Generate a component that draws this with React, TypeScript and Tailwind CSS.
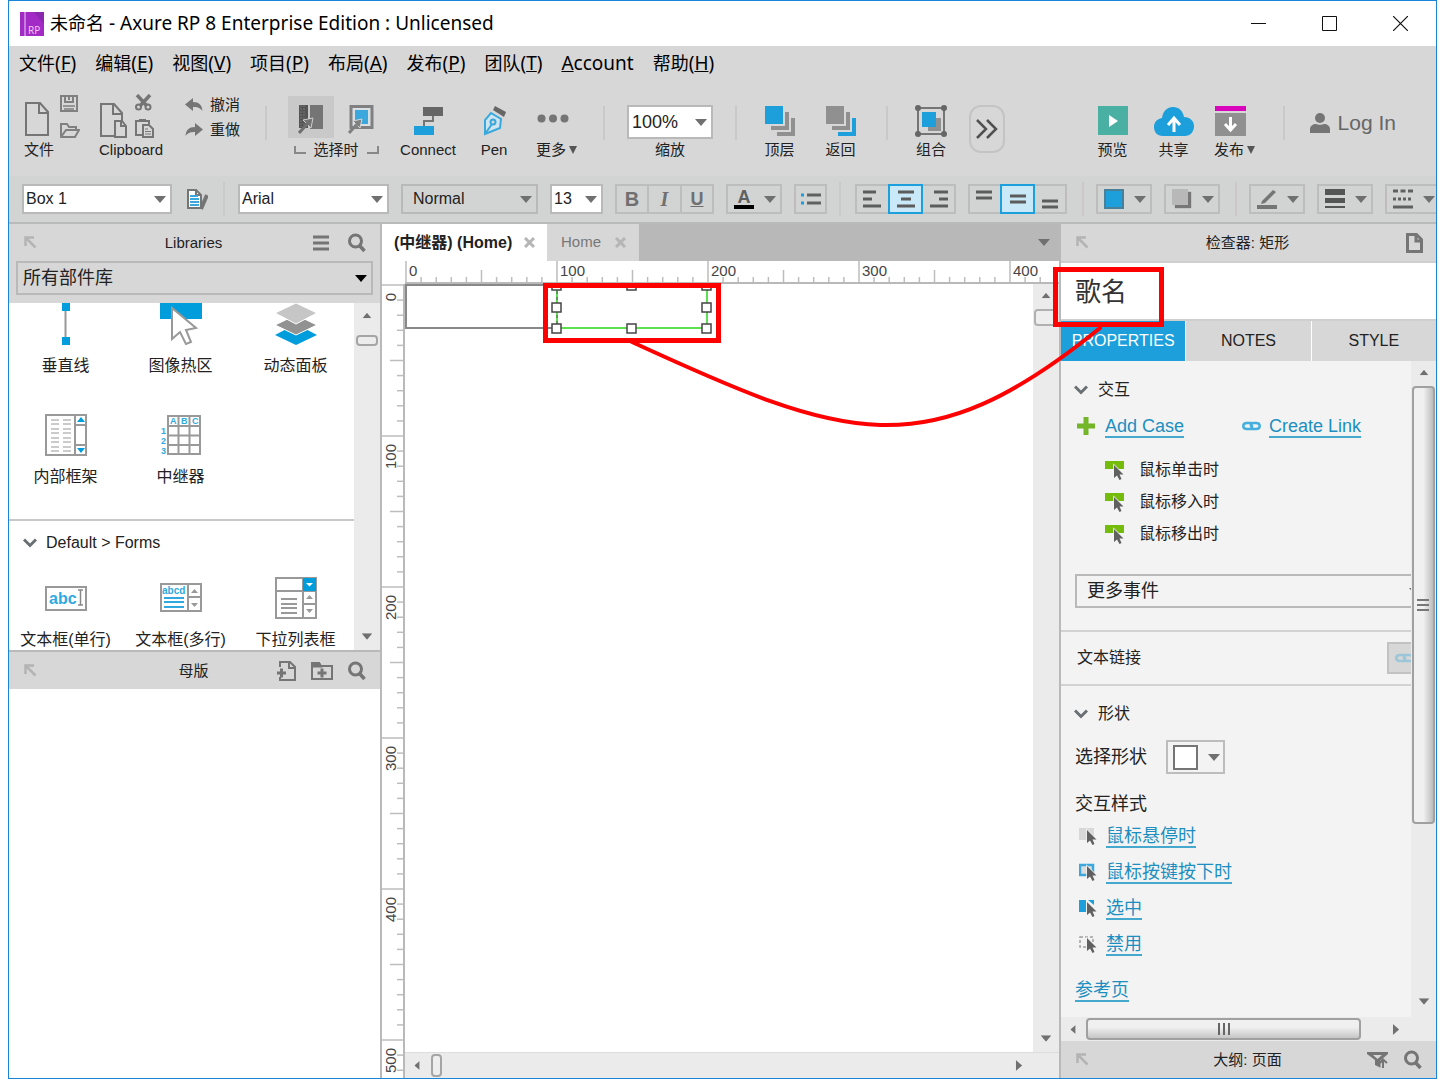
import React from 'react';

type IconProps = { className?: string };

const menus = [
  { text: '文件', key: 'F' },
  { text: '编辑', key: 'E' },
  { text: '视图', key: 'V' },
  { text: '项目', key: 'P' },
  { text: '布局', key: 'A' },
  { text: '发布', key: 'P' },
  { text: '团队', key: 'T' },
];

// one ruler unit of 100 is drawn 151px wide
const UNIT = 151;
const ticks = Array.from({ length: 60 }, (_, i) => i);

/* ---------- small shared pieces ---------- */

const Caret: React.FC<IconProps> = ({ className = 'text-[#707070]' }) => (
  <svg width="12" height="7" viewBox="0 0 12 7" className={className} fill="currentColor">
    <path d="M0 0h12L6 7z" />
  </svg>
);

const Select: React.FC<{ label: string; value: string; className: string; text?: string; caret?: string; pos?: string }> = ({
  label,
  value,
  className,
  text = 'text-base pl-0.5',
  caret = 'text-[#707070]',
  pos = 'right-1',
}) => (
  <div className={`relative shrink-0 border-2 border-[#b9b9b9] ${className}`}>
    <select aria-label={label} className={`block w-full h-full appearance-none bg-transparent outline-none ${text}`}>
      <option>{value}</option>
    </select>
    <span className={`absolute inset-y-0 flex items-center pointer-events-none ${pos}`}>
      <Caret className={caret} />
    </span>
  </div>
);

const Sep: React.FC<IconProps> = ({ className = '' }) => (
  <span className={`w-0.5 h-[34px] shrink-0 bg-[#c9c9c9] ${className}`} />
);

const Tool: React.FC<{ label: string; className: string; arrow?: boolean; children: React.ReactNode }> = ({
  label,
  className,
  arrow,
  children,
}) => (
  <button className={`flex flex-col items-center shrink-0 ${className}`}>
    <span className={arrow ? 'h-[39px] flex items-center pr-2' : 'h-[39px] flex items-center'}>{children}</span>
    <span className="flex items-center h-5 text-[15px] leading-5 whitespace-nowrap">
      {label}
      {arrow && (
        <svg width="8" height="8" viewBox="0 0 8 8" className="ml-[3px] text-[#555]" fill="currentColor">
          <path d="M0 0h8L4 8z" />
        </svg>
      )}
    </span>
  </button>
);

const CornerArrow = () => (
  <svg width="13" height="13" viewBox="0 0 13 13" fill="none" stroke="#b4b4b4" strokeWidth="2.5">
    <path d="M1.500 10V1.500H10M2 2l9.500 9.500" />
  </svg>
);

const SearchIcon = () => (
  <svg width="20" height="20" viewBox="0 0 20 20" fill="none" stroke="#757575" strokeWidth="3">
    <circle cx="8.500" cy="8" r="6" />
    <path d="M12.500 12.500l5 5.500" strokeWidth="3.500" />
  </svg>
);

const Chevron = () => (
  <svg width="14" height="10" viewBox="0 0 14 10" fill="none" stroke="#6a6f73" strokeWidth="3">
    <path d="M1 1.500l6 6 6-6" />
  </svg>
);

const PanelHeader: React.FC<{ title: string; children: React.ReactNode }> = ({ title, children }) => (
  <div className="grid grid-cols-[1fr_auto_1fr] items-center h-[37px] shrink-0 pl-[15px] pr-[13px] bg-[#d7d7d7]">
    <button aria-label="浮动" className="justify-self-start">
      <CornerArrow />
    </button>
    <h2 className="pr-1 text-[15px] leading-5">{title}</h2>
    <div className="flex items-center justify-end gap-3.5">{children}</div>
  </div>
);

/* ---------- toolbar icons ---------- */

const FileIcon = () => (
  <svg width="24" height="34" viewBox="0 0 24 34" fill="none" stroke="#757575" strokeWidth="2">
    <path d="M1 1h14l8 9v23H1zM14 1v10h9" />
  </svg>
);

const SaveIcon = () => (
  <svg width="18" height="17" viewBox="0 0 18 17" fill="none" stroke="#808080" strokeWidth="2">
    <path d="M1 1h16v15H1z" />
    <path d="M5 1v6h8V1M9 2v3" />
    <path d="M3 11h12M4 14h10" strokeWidth="1.500" />
  </svg>
);

const OpenIcon = () => (
  <svg width="20" height="16" viewBox="0 0 20 16" fill="none" stroke="#808080" strokeWidth="2">
    <path d="M1 14V2h6l2 3h7v3" />
    <path d="M1 15l5-7h13l-4 7z" />
  </svg>
);

const CopyIcon = () => (
  <svg width="27" height="35" viewBox="0 0 27 35" fill="none" stroke="#757575" strokeWidth="2">
    <path d="M15 33H1V1h13l8 9v8M13 1v10h9" />
    <path d="M15 18h7l4 5v11H15zM21 18v5h5" />
  </svg>
);

const CutIcon = () => (
  <svg width="17" height="17" viewBox="0 0 17 17" fill="none" stroke="#757575">
    <path d="M2 1l10 11M15 1L5 12" strokeWidth="3.500" />
    <circle cx="3.500" cy="13" r="2.500" strokeWidth="2" />
    <circle cx="13" cy="13" r="2.500" strokeWidth="2" />
  </svg>
);

const PasteIcon = () => (
  <svg width="19" height="19" viewBox="0 0 19 19" fill="none" stroke="#757575" strokeWidth="2">
    <path d="M8 16H1V2h13v3M5 2V0h5v2" />
    <path d="M8 6h6l4 4v8H8z" />
    <path d="M10 10h3M10 12.500h6M10 15h6" strokeWidth="1" />
  </svg>
);

const UndoIcon: React.FC<IconProps> = ({ className }) => (
  <svg width="18" height="14" viewBox="0 0 18 14" fill="#757575" className={className}>
    <path d="M8 0v4c6 0 9 3 9.500 9C15 9.500 12 9 8 9v4L0 6.500z" />
  </svg>
);

const IntersectIcon = () => (
  <svg width="26" height="30" viewBox="0 0 26 30">
    <path d="M1 1h9v23H1z" fill="#555" />
    <path d="M3 1v22M6 1v22" stroke="#777" strokeWidth="1" strokeDasharray="2 1" />
    <path d="M12 1h13v24H12z" fill="#757575" />
    <path d="M5 16l10-2-2 10z" fill="#757575" stroke="#ccc" strokeWidth="1" />
    <path d="M1 29L12 17" stroke="#707070" strokeWidth="3" />
  </svg>
);

const ContainIcon = () => (
  <svg width="27" height="30" viewBox="0 0 27 30">
    <path d="M3 2.500h21v21H3z" fill="#d9dfe2" stroke="#808080" strokeWidth="3" />
    <path d="M7 6h13v14H7z" fill="#3aa8dc" />
    <path d="M5 17l9-2-2 9z" fill="#808080" stroke="#d7d7d7" strokeWidth="1" />
    <path d="M1 29L11 18" stroke="#808080" strokeWidth="3" />
  </svg>
);

const ConnectIcon = () => (
  <svg width="30" height="30" viewBox="0 0 30 30">
    <path d="M10 1h20v9H10z" fill="#666" />
    <path d="M20 10v5h-9v6" fill="none" stroke="#757575" strokeWidth="2" />
    <path d="M1 20h20v9H1z" fill="#1c9fdb" />
  </svg>
);

const PenIcon = () => (
  <svg width="23" height="30" viewBox="0 0 23 30">
    <path d="M12 0l11 6-2 5-11-7z" fill="#666" />
    <path d="M8 7l10 6-1 9L2 28 2 14z" fill="#cfe6f1" stroke="#3aa8dc" strokeWidth="2" />
    <path d="M2 28l7-10" stroke="#3aa8dc" strokeWidth="2" />
    <circle cx="10" cy="16" r="2.500" fill="#d7d7d7" stroke="#3aa8dc" strokeWidth="2" />
  </svg>
);

const FrontIcon = () => (
  <svg width="32" height="32" viewBox="0 0 32 32" fill="#909090">
    <path d="M1 1h18v18H1z" fill="#1c9fdb" />
    <path d="M21 7h4v18H7v-4h14z" />
    <path d="M27 13h4v18H13v-4h14z" />
  </svg>
);

const BackIcon = () => (
  <svg width="32" height="32" viewBox="0 0 32 32" fill="#909090">
    <path d="M1 1h18v18H1z" />
    <path d="M21 7h4v18H7v-4h14z" />
    <path d="M27 13h4v18H13v-4h14z" fill="#1c9fdb" />
  </svg>
);

const GroupIcon = () => (
  <svg width="34" height="34" viewBox="0 0 34 34">
    <path d="M4 4h26v26H4z" fill="none" stroke="#757575" strokeWidth="2" />
    <path d="M14 14h13v13H14z" fill="#909090" />
    <path d="M8 8h14v15H8z" fill="#1c9fdb" />
    <g fill="#666">
      <circle cx="4" cy="4" r="3" />
      <circle cx="30" cy="4" r="3" />
      <circle cx="4" cy="30" r="3" />
      <circle cx="30" cy="30" r="3" />
    </g>
  </svg>
);

const PreviewIcon = () => (
  <svg width="30" height="29" viewBox="0 0 30 29">
    <path d="M0 0h30v29H0z" fill="#4bb0a4" />
    <path d="M11 9l9 6-9 6z" fill="#fff" />
  </svg>
);

const CloudIcon = () => (
  <svg width="40" height="30" viewBox="0 0 40 30">
    <path d="M9 30C3 30 0 26 0 21c0-5 3-8 8-9C9 5 13 1 19 1c6 0 10 4 11 10 6 0 10 4 10 9 0 6-4 10-9 10z" fill="#1c9fdb" />
    <path d="M20 26V14M14 19l6-7 6 7" fill="none" stroke="#fff" strokeWidth="3" />
  </svg>
);

const PublishIcon = () => (
  <svg width="31" height="30" viewBox="0 0 31 30">
    <path d="M0 0h31v5H0z" fill="#d905bd" />
    <path d="M0 7h31v23H0z" fill="#909090" />
    <path d="M15.500 11v12M10 18l5.500 6 5.500-6" fill="none" stroke="#fff" strokeWidth="3" />
  </svg>
);

/* ---------- format bar ---------- */

const btn = 'flex items-center justify-center h-[30px] border-2 border-[#bdbdbd] shrink-0';
const btnOn = 'flex items-center justify-center h-[30px] border-2 border-[#1c9fdb] bg-[#c9e9f8] shrink-0';

const Lines: React.FC<{ d: string }> = ({ d }) => (
  <svg width="20" height="20" viewBox="0 0 20 20" fill="none" stroke="#5c5c5c" strokeWidth="3">
    <path d={d} />
  </svg>
);

const DropButton: React.FC<{ label: string; children: React.ReactNode }> = ({ label, children }) => (
  <button aria-label={label} className="flex items-center justify-between w-14 h-[30px] pl-1.5 pr-1 border-2 border-[#bdbdbd] shrink-0">
    {children}
    <Caret />
  </button>
);

const FormatBar = () => (
  <div className="flex items-center h-12 shrink-0 pl-[13px] gap-3 bg-[#d2d4d4] border-b-2 border-[#bababa] overflow-hidden">
    <Select label="样式" value="Box 1" className="w-[150px] h-[30px] bg-white" />
    <button aria-label="管理样式" className="ml-[3px] mr-[3px] shrink-0">
      <svg width="21" height="21" viewBox="0 0 21 21">
        <path d="M1 1h8l5 5v13H1z" fill="#fff" stroke="#757575" strokeWidth="2" />
        <path d="M9 1v5h5" fill="none" stroke="#757575" strokeWidth="2" />
        <path d="M3 7h8M3 10h9M3 13h9M3 16h9" stroke="#3aa8dc" strokeWidth="2" />
        <path d="M20 6l-6 14" stroke="#757575" strokeWidth="4" />
      </svg>
    </button>
    <Sep className="mr-px" />
    <Select label="字体" value="Arial" className="w-[151px] h-[30px] bg-white" />
    <Select label="字形" value="Normal" className="w-[137px] h-[30px]" text="text-base pl-2.5" />
    <Select label="字号" value="13" className="w-[53px] h-[30px] bg-white" />
    <div className="flex -space-x-0.5 text-[#707070] text-xl leading-5">
      <button className={`${btn} w-[34px] font-bold`}>B</button>
      <button className={`${btn} w-[35px] font-bold italic font-['Liberation_Serif',serif]`}>I</button>
      <button className={`${btn} w-[34px] font-bold underline text-lg`}>U</button>
    </div>
    <DropButton label="文字颜色">
      <span className="flex flex-col items-center w-5 text-[#606060] text-lg font-bold leading-4">
        A
        <span className="w-5 h-1 bg-black" />
      </span>
    </DropButton>
    <button aria-label="项目符号" className={`${btn} w-[33px]`}>
      <svg width="20" height="14" viewBox="0 0 20 14">
        <path d="M6 3h14M6 11h14" stroke="#606060" strokeWidth="3" />
        <path d="M0 3h3M0 11h3" stroke="#1c9fdb" strokeWidth="3" />
      </svg>
    </button>
    <Sep className="mr-[2px]" />
    <div className="flex">
      <button aria-label="左对齐" className={`${btn} w-[33px] border-r-0`}><Lines d="M0 3h13M0 10h9M0 17h18" /></button>
      <button aria-label="居中" className={`${btnOn} w-[35px]`}><Lines d="M2 3h16M5 10h10M1 17h18" /></button>
      <button aria-label="右对齐" className={`${btn} w-[33px] border-l-0`}><Lines d="M5 3h14M10 10h9M1 17h18" /></button>
    </div>
    <div className="flex">
      <button aria-label="顶部对齐" className={`${btn} w-[32px] border-r-0`}><Lines d="M1 3h16M1 9h16" /></button>
      <button aria-label="垂直居中" className={`${btnOn} w-[35px]`}><Lines d="M2 7h16M2 13h16" /></button>
      <button aria-label="底部对齐" className={`${btn} w-[32px] border-l-0`}><Lines d="M2 12h16M2 18h16" /></button>
    </div>
    <Sep className="ml-[3px]" />
    <DropButton label="填充颜色">
      <span className="w-5 h-5 bg-[#1c9fdb] border-2 border-[#4a7f9a]" />
    </DropButton>
    <DropButton label="外部阴影">
      <span className="w-4 h-4 mb-1 bg-[#b8b8b8] shadow-[3px_3px_1px_#777]" />
    </DropButton>
    <Sep className="ml-[3px]" />
    <DropButton label="线段颜色">
      <svg width="20" height="20" viewBox="0 0 20 20">
        <path d="M0 16h20v4H0z" fill="#757575" />
        <path d="M5 12L16 1l3 2L8 14l-4 1z" fill="#757575" />
      </svg>
    </DropButton>
    <DropButton label="线宽">
      <svg width="20" height="20" viewBox="0 0 20 20" fill="#555">
        <path d="M0 0h20v6H0zM0 9h20v5H0zM0 17h20v2H0z" />
      </svg>
    </DropButton>
    <DropButton label="线段类型">
      <svg width="20" height="20" viewBox="0 0 20 20" stroke="#606060" strokeWidth="3">
        <path d="M0 2h20" strokeDasharray="5 2.500" />
        <path d="M0 10h20" strokeDasharray="3 2" />
        <path d="M0 18h20" />
      </svg>
    </DropButton>
  </div>
);

const Toolbar = () => (
  <div className="flex items-end h-[94px] shrink-0 pl-[15px] pr-10 pb-4 overflow-hidden">
    <div className="flex flex-col w-[75px] shrink-0">
      <div className="flex items-end h-[46px] pl-px pb-0.5 gap-[11px]">
        <button aria-label="新建" className="pb-0.5"><FileIcon /></button>
        <div className="flex flex-col gap-2.5">
          <button aria-label="保存"><SaveIcon /></button>
          <button aria-label="打开"><OpenIcon /></button>
        </div>
      </div>
      <span className="text-[15px] leading-5">文件</span>
    </div>
    <div className="flex flex-col w-[86px] shrink-0">
      <div className="flex items-end h-[46px] pl-px pb-0.5 gap-2">
        <button aria-label="复制"><CopyIcon /></button>
        <div className="flex flex-col gap-2">
          <button aria-label="剪切"><CutIcon /></button>
          <button aria-label="粘贴"><PasteIcon /></button>
        </div>
      </div>
      <span className="text-[15px] leading-5">Clipboard</span>
    </div>
    <div className="flex flex-col self-start shrink-0 pt-[13px] gap-[5px] text-[15px] leading-5">
      <button className="flex items-center gap-[7px]"><UndoIcon />撤消</button>
      <button className="flex items-center gap-[7px]"><UndoIcon className="-scale-x-100" />重做</button>
    </div>
    <Sep className="ml-[25px] mr-[21px] mb-5" />
    <div className="flex flex-col items-center shrink-0">
      <div className="flex pb-0.5 gap-1">
        <button aria-label="相交选中" className="flex items-center justify-center w-[46px] h-[42px] pt-1 bg-[#c9c9c9]"><IntersectIcon /></button>
        <button aria-label="包含选中" className="flex items-center justify-center w-[46px] h-[42px] pt-1"><ContainIcon /></button>
      </div>
      <span className="flex items-center gap-2 text-[15px] leading-5">
        <span className="w-3 h-2 border-l-2 border-b-2 border-[#888]" />
        选择时
        <span className="w-3 h-2 border-r-2 border-b-2 border-[#888]" />
      </span>
    </div>
    <Tool label="Connect" className="w-14 ml-4"><ConnectIcon /></Tool>
    <Tool label="Pen" className="w-7 ml-6"><PenIcon /></Tool>
    <Tool label="更多" className="w-[41px] ml-7" arrow>
      <svg width="32" height="9" viewBox="0 0 32 9" fill="#757575" className="mb-1">
        <circle cx="4.500" cy="4.500" r="4" />
        <circle cx="16" cy="4.500" r="4" />
        <circle cx="27.500" cy="4.500" r="4" />
      </svg>
    </Tool>
    <Sep className="mx-[26px] mb-5" />
    <div className="flex flex-col items-center shrink-0 -ml-1">
      <Select label="缩放" value="100%" className="w-[86px] h-[34px] mb-px bg-white" text="text-lg pl-[3px]" />
      <span className="text-[15px] leading-5">缩放</span>
    </div>
    <Sep className="ml-[22px] mr-[26px] mb-5" />
    <Tool label="顶层" className="w-[33px]"><FrontIcon /></Tool>
    <Tool label="返回" className="w-[33px] ml-7"><BackIcon /></Tool>
    <Sep className="ml-[29px] mr-[26px] mb-5" />
    <Tool label="组合" className="w-[34px]"><GroupIcon /></Tool>
    <button aria-label="更多工具" className="flex items-center justify-center w-9 h-12 ml-[21px] mb-[7px] shrink-0 border-2 border-[#c4c4c4] rounded-xl">
      <svg width="22" height="20" viewBox="0 0 22 20" fill="none" stroke="#505050" strokeWidth="2.500">
        <path d="M1 1l9 9-9 9M11 1l9 9-9 9" />
      </svg>
    </button>
    <div className="flex items-end ml-auto">
      <Tool label="预览" className="w-[30px]"><PreviewIcon /></Tool>
      <Tool label="共享" className="w-10 ml-[26px]"><CloudIcon /></Tool>
      <Tool label="发布" className="w-[42px] ml-5" arrow><PublishIcon /></Tool>
      <Sep className="ml-[27px] mr-[25px] mb-5" />
      <button className="flex items-center gap-2 h-7 mb-[23px] whitespace-nowrap text-[21px] leading-7 text-[#666]">
        <svg width="20" height="20" viewBox="0 0 20 20" fill="#757575">
          <circle cx="10" cy="5" r="5" />
          <path d="M0 20v-4c0-3 3-5 6-5 2 1 6 1 8 0 3 0 6 2 6 5v4z" />
        </svg>
        Log In
      </button>
    </div>
  </div>
);

/* ---------- left: libraries and masters ---------- */

const Widget: React.FC<{ label: string; children: React.ReactNode }> = ({ label, children }) => (
  <div className="flex flex-col items-center w-[115px] shrink-0 pr-0.5">
    <svg width="42" height="42" viewBox="0 0 42 42">{children}</svg>
    <span className="mt-[9px] text-base leading-6 whitespace-nowrap">{label}</span>
  </div>
);

const Libraries = () => (
  <section className="flex flex-col h-[428px] shrink-0 bg-white border-b-2 border-[#b9b9b9]">
    <PanelHeader title="Libraries">
      <button aria-label="选项" className="mr-1">
        <svg width="16" height="16" viewBox="0 0 16 16" stroke="#757575" strokeWidth="3">
          <path d="M0 2h16M0 8h16M0 14h16" />
        </svg>
      </button>
      <button aria-label="搜索"><SearchIcon /></button>
    </PanelHeader>
    <div className="px-[7px] pb-2 bg-[#d7d7d7]">
      <Select label="部件库" value="所有部件库" className="h-[34px]" text="text-lg pl-[5px]" caret="text-black" />
    </div>
    <div className="flex flex-1 min-h-0">
      <div className="flex-1 overflow-hidden">
        <div className="flex">
          <Widget label="垂直线">
            <path d="M20.500 4v30" stroke="#999" strokeWidth="2" />
            <path d="M17 0h8v8h-8zM17 34h8v8h-8z" fill="#009ddc" />
          </Widget>
          <Widget label="图像热区">
            <path d="M0 0h42v16H0z" fill="#009ddc" />
            <path d="M12 5v31l8-7 6 12 5-2-5-12 10-2z" fill="#fff" stroke="#999" strokeWidth="2" />
          </Widget>
          <Widget label="动态面板">
            <path d="M0 32l21-11 21 11-21 10z" fill="#009ddc" />
            <path d="M0 22l21-10 21 10-21 10z" fill="#929292" stroke="#fff" strokeWidth="1" />
            <path d="M0 10L21 0l21 10-21 11z" fill="#c6c6c6" stroke="#fff" strokeWidth="1" />
          </Widget>
        </div>
        <div className="flex mt-9 pb-[30px] border-b-2 border-[#c8c8c8]">
          <Widget label="内部框架">
            <path d="M1 1h40v40H1zM30 1v40M30 11h11M30 31h11" fill="none" stroke="#999" strokeWidth="2" />
            <path d="M6 6h8M18 6h8M6 10h8M18 10h8M6 15h8M18 15h8M6 19h8M18 19h8M6 24h8M18 24h8M6 28h8M18 28h8M6 33h8M18 33h8M6 37h8M18 37h8" stroke="#bbb" strokeWidth="1.500" />
            <path d="M32 8l4-5 4 5zM32 34h8l-4 5z" fill="#009ddc" />
          </Widget>
          <Widget label="中继器">
            <path d="M8 2h32v38H8zM18.500 2v38M29.500 2v38M8 12h32M8 21.500h32M8 31h32" fill="none" stroke="#999" strokeWidth="2" />
            <g fill="#2fa9e0" fontSize="9" fontWeight="bold">
              <text x="10" y="10">A</text>
              <text x="21" y="10">B</text>
              <text x="32" y="10">C</text>
              <text x="1" y="20">1</text>
              <text x="1" y="30">2</text>
              <text x="1" y="40">3</text>
            </g>
          </Widget>
        </div>
        <h3 className="flex items-center h-11 pl-[14px] mb-3 gap-[9px] text-base"><Chevron />Default &gt; Forms</h3>
        <div className="flex">
          <Widget label="文本框(单行)">
            <path d="M1 10h40v23H1z" fill="none" stroke="#999" strokeWidth="2" />
            <text x="4" y="27" fill="#2fa9e0" fontSize="16" fontWeight="bold">abc</text>
            <path d="M33 13h5M33 28h5M35.500 13v15" stroke="#888" strokeWidth="1.500" />
          </Widget>
          <Widget label="文本框(多行)">
            <path d="M1 7h40v27H1zM28 7v27M28 20h13" fill="none" stroke="#999" strokeWidth="2" />
            <text x="2" y="17" fill="#2fa9e0" fontSize="10" fontWeight="bold">abcd</text>
            <path d="M4 21h20M4 25h20M4 30h20" stroke="#2fa9e0" strokeWidth="2" />
            <path d="M31 16l3.500-4 3.500 4zM31 26h7l-3.500 4z" fill="#999" />
          </Widget>
          <Widget label="下拉列表框">
            <path d="M1 1h40v40H1zM28 1v40M1 14h40M28 27h13" fill="none" stroke="#999" strokeWidth="2" />
            <path d="M28 1h13v13H28z" fill="#009ddc" />
            <path d="M31 6h7l-3.500 3.500z" fill="#fff" />
            <path d="M6 22h16M6 27h16M6 31h16M6 36h16" stroke="#999" strokeWidth="2" />
            <path d="M31 22l3.500-4 3.500 4zM31 32h7l-3.500 4z" fill="#999" />
          </Widget>
        </div>
      </div>
      <div className="flex flex-col items-center w-[26px] shrink-0 pt-[9px] pb-2.5 bg-[#ebebeb]">
        <Caret className="rotate-180 scale-75 text-[#707070]" />
        <span className="w-[22px] h-[11px] mt-4 bg-[#ececec] border-2 border-[#a5a5a5] rounded" />
        <Caret className="mt-auto scale-90 text-[#707070]" />
      </div>
    </div>
  </section>
);

const Masters = () => (
  <section className="flex-1 bg-white">
    <PanelHeader title="母版">
      <button aria-label="添加母版">
        <svg width="20" height="20" viewBox="0 0 20 20" fill="none" stroke="#757575" strokeWidth="2">
          <path d="M3 6V1h10l5 5v13H3v-3M12 1v6h6" />
          <path d="M0 12h9M4.500 7.500v9" strokeWidth="3" />
        </svg>
      </button>
      <button aria-label="添加文件夹">
        <svg width="22" height="20" viewBox="0 0 22 20" fill="none" stroke="#757575" strokeWidth="2">
          <path d="M1 18V2h7l2 3h11v13z" />
          <path d="M1 3h7l1 2H1zM6.500 12h9M11 7.500v9" strokeWidth="3" />
        </svg>
      </button>
      <button aria-label="搜索"><SearchIcon /></button>
    </PanelHeader>
  </section>
);

/* ---------- centre: tabs, rulers and canvas ---------- */

const CloseX = () => (
  <svg width="11" height="11" viewBox="0 0 11 11" stroke="#b5b5b5" strokeWidth="3">
    <path d="M1 1l9 9M10 1l-9 9" />
  </svg>
);

const tickLength = (i: number) => (i % 10 === 0 ? 23 : i % 5 === 0 ? 13 : 6);

const HRuler = () => (
  <div className="h-[23px] shrink-0 ml-[23px] overflow-hidden border-b-2 border-[#b9b9b9]">
    <svg width="900" height="23">
      {ticks.map((i) => (
        <path key={i} d={`M${1 + (i * UNIT) / 10} 22v-${tickLength(i)}`} stroke="#bdbdbd" strokeWidth="1.500" />
      ))}
      {[0, 1, 2, 3, 4].map((n) => (
        <text key={n} x={n * UNIT + 4} y="15" fontSize="15" fill="#444">{n * 100}</text>
      ))}
    </svg>
  </div>
);

const VRuler = () => (
  <div className="w-[23px] shrink-0 overflow-hidden border-r-2 border-[#b9b9b9]">
    <svg width="21" height="900">
      {ticks.map((i) => (
        <path key={i} d={`M21 ${1 + (i * UNIT) / 10}h-${tickLength(i)}`} stroke="#bdbdbd" strokeWidth="1.500" />
      ))}
      {[0, 1, 2, 3, 4, 5].map((n) => (
        <text key={n} transform={`translate(14 ${n * UNIT + 9}) rotate(-90)`} textAnchor="end" fontSize="15" fill="#444">
          {n * 100}
        </text>
      ))}
    </svg>
  </div>
);

const handles = [
  [152, 2], [227, 2], [302, 2],
  [152, 24], [302, 24],
  [152, 45], [227, 45], [302, 45],
];

const Workspace = () => (
  <main className="flex flex-col flex-1 min-w-0 bg-white">
    <div className="flex items-center h-[37px] shrink-0 pr-[9px] bg-[#b8b8b8]">
      <button className="flex items-center h-full w-[165px] pl-3 gap-3 bg-white font-bold text-base whitespace-nowrap">
        (中继器) (Home)
        <CloseX />
      </button>
      <button className="flex items-center h-full w-[92px] pl-3.5 gap-3.5 bg-[#d7d7d7] text-[15px] text-[#777]">
        Home
        <CloseX />
      </button>
      <button aria-label="标签列表" className="ml-auto"><Caret /></button>
    </div>
    <HRuler />
    <div className="flex flex-1 min-h-0">
      <VRuler />
      <div className="flex flex-col flex-1 min-w-0">
        <div className="flex flex-1 min-h-0">
          <div className="flex-1 overflow-hidden">
            <svg width="400" height="70" fill="none">
              <path d="M1 1h151v43H1z" stroke="#888" strokeWidth="2" />
              <path d="M152 1h150v43H152z" stroke="#5be04f" strokeWidth="2" />
              <path d="M152 1v43" stroke="#555" strokeDasharray="3 3" />
              {handles.map(([x, y]) => (
                <rect key={`${x}-${y}`} x={x - 5} y={y - 5} width="9" height="9" fill="#fff" stroke="#444" strokeWidth="1.500" />
              ))}
            </svg>
          </div>
          <div className="flex flex-col items-center w-[26px] shrink-0 pt-2 pb-2.5 bg-[#ebebeb]">
            <Caret className="rotate-180 scale-75 text-[#707070]" />
            <span className="w-6 h-[17px] mt-2.5 bg-[#eee] border-2 border-[#b0b0b0] rounded" />
            <Caret className="mt-auto scale-90 text-[#707070]" />
          </div>
        </div>
        <div className="flex items-center h-[26px] shrink-0 pl-1.5 pr-[34px] bg-[#ebebeb] border-t border-[#ddd]">
          <Caret className="rotate-90 scale-75 text-[#707070]" />
          <span className="w-[11px] h-[23px] ml-2 bg-[#eee] border-2 border-[#a5a5a5] rounded" />
          <Caret className="ml-auto -rotate-90 scale-90 text-[#707070]" />
        </div>
      </div>
    </div>
  </main>
);

/* ---------- right: inspector ---------- */

const LinkIcon = () => (
  <svg width="19" height="10" viewBox="0 0 19 10" fill="none" stroke="#45b0de" strokeWidth="2.500">
    <path d="M10 2H5C0 2 0 8 5 8h2c4 0 4-4 1-4M9 8h5c5 0 5-6 0-6h-2C8 2 8 6 11 6" />
  </svg>
);

const Pointer = () => (
  <path d="M8 3v13l3-2.500 2.500 4.500 2-1-2-4.500h4z" fill="#606060" stroke="#f3f3f3" strokeWidth="1.500" paintOrder="stroke" />
);

const EventIcon = () => (
  <svg width="20" height="19" viewBox="0 0 20 19">
    <path d="M0 0h19v8H0z" fill="#74bb0c" />
    <g transform="translate(1 1)"><Pointer /></g>
  </svg>
);

const events = ['鼠标单击时', '鼠标移入时', '鼠标移出时'];

const states = [
  { label: '鼠标悬停时', shape: <path d="M0 1h15v12H0z" fill="#d8d8d8" /> },
  { label: '鼠标按键按下时', shape: <path d="M1 2h13v10H1z" fill="#dcdcdc" stroke="#3aa8dc" strokeWidth="2.500" /> },
  { label: '选中', shape: <path d="M0 1h7v12H0zM9 1h6v5z" fill="#1c9fdb" /> },
  { label: '禁用', shape: <path d="M1 2h13v10H1z" fill="none" stroke="#a0a0a0" strokeWidth="1.500" strokeDasharray="3 2" /> },
];

const link = 'text-lg leading-6 text-[#1c8fc0] underline underline-offset-4 decoration-2 decoration-[#45a8cf]';

const Inspector = () => (
  <aside className="flex flex-col w-[377px] shrink-0 border-l-2 border-[#b9b9b9] bg-[#f3f3f3]">
    <PanelHeader title="检查器: 矩形">
      <button aria-label="页面">
        <svg width="17" height="20" viewBox="0 0 17 20" fill="none" stroke="#757575" strokeWidth="3">
          <path d="M1.500 1.500h9l5 5v12h-14zM10 2v6h5" />
        </svg>
      </button>
    </PanelHeader>
    <input
      aria-label="名称"
      defaultValue="歌名"
      className="h-[60px] shrink-0 px-3.5 pb-1 bg-white border-y-2 border-[#cfcfcf] text-[26px] text-[#333] outline-none"
    />
    <div className="grid grid-cols-3 h-10 shrink-0 gap-px bg-white text-base">
      <button className="bg-[#1c9fdb] text-white">PROPERTIES</button>
      <button className="bg-[#d7d7d7]">NOTES</button>
      <button className="bg-[#d7d7d7]">STYLE</button>
    </div>
    <div className="flex flex-1 min-h-0">
      <div className="flex-1 min-w-0 overflow-hidden">
        <h3 className="flex items-center h-6 mt-[17px] pl-[13px] gap-[10px] text-base"><Chevron />交互</h3>
        <div className="flex items-center h-6 mt-3 pl-4">
          <svg width="18" height="18" viewBox="0 0 18 18" stroke="#74b629" strokeWidth="5">
            <path d="M9 0v18M0 9h18" />
          </svg>
          <a href="#add-case" className={`ml-2.5 ${link}`}>Add Case</a>
          <span className="ml-[58px] mr-2"><LinkIcon /></span>
          <a href="#create-link" className={link}>Create Link</a>
        </div>
        <ul className="mt-4 pl-11">
          {events.map((name) => (
            <li key={name} className="flex items-center h-8 gap-[14px] text-base"><EventIcon />{name}</li>
          ))}
        </ul>
        <div className="flex mt-6 pl-3.5">
          <Select label="更多事件" value="更多事件" className="w-[350px] h-[34px]" text="text-lg pl-2.5" pos="right-0.5" />
        </div>
        <div className="flex items-center justify-between h-14 mt-[22px] pl-4 border-y-2 border-[#d2d2d2] text-base">
          文本链接
          <button aria-label="插入文本链接" className="flex items-center w-6 h-8 pl-1.5 overflow-hidden border-2 border-r-0 border-[#c2c2c2] bg-[#d7d7d7]">
            <span className="shrink-0 opacity-40"><LinkIcon /></span>
          </button>
        </div>
        <h3 className="flex items-center h-6 mt-4 pl-[13px] gap-[10px] text-base"><Chevron />形状</h3>
        <div className="flex items-center mt-3.5 pl-3.5 gap-[19px] text-lg">
          选择形状
          <button aria-label="选择形状" className="flex items-center justify-between w-[59px] h-[34px] pl-[5px] pr-[3px] border-2 border-[#bdbdbd]">
            <span className="w-[25px] h-[25px] bg-white border-2 border-[#757575]" />
            <Caret />
          </button>
        </div>
        <h4 className="mt-[18px] pl-3.5 text-lg leading-6">交互样式</h4>
        <ul className="pt-0.5 pl-[18px]">
          {states.map((s) => (
            <li key={s.label} className="flex items-center h-9 gap-[9px]">
              <svg width="18" height="19" viewBox="0 0 18 19">
                {s.shape}
                <Pointer />
              </svg>
              <a href="#state" className={link}>{s.label}</a>
            </li>
          ))}
        </ul>
        <div className="mt-4 pl-3.5"><a href="#reference" className={link}>参考页</a></div>
      </div>
      <div className="flex flex-col items-center w-[25px] shrink-0 pt-2 pb-3 bg-[#ebebeb]">
        <Caret className="rotate-180 scale-75 text-[#707070]" />
        <span className="flex items-center w-[23px] h-[438px] mt-[10px] pl-[3px] bg-gradient-to-r from-[#f0f0f0] from-50% to-[#bdbdbd] border-2 border-[#a0a0a0] rounded">
          <span className="w-3 h-3 border-y-2 border-[#777] flex items-center"><span className="w-full h-0.5 bg-[#777]" /></span>
        </span>
        <Caret className="mt-auto scale-90 text-[#707070]" />
      </div>
    </div>
    <div className="flex items-center h-6 shrink-0 pl-1.5 pr-[34px] bg-[#ebebeb]">
      <Caret className="rotate-90 scale-75 text-[#707070]" />
      <span className="flex items-center justify-center w-[275px] h-[22px] ml-[7px] bg-gradient-to-b from-[#f0f0f0] from-40% to-[#c6c6c6] border-2 border-[#a0a0a0] rounded">
        <span className="w-3 h-3 border-x-2 border-[#666] flex justify-center"><span className="w-0.5 h-full bg-[#666]" /></span>
      </span>
      <Caret className="ml-auto -rotate-90 scale-90 text-[#707070]" />
    </div>
    <PanelHeader title="大纲: 页面">
      <button aria-label="筛选">
        <svg width="22" height="18" viewBox="0 0 22 18">
          <path d="M0 1h21v2l-7 6v8l-6-3V9L0 3z" fill="#757575" />
          <path d="M6 4h9l-4.500 4z" fill="#d7d7d7" />
          <path d="M16 18V9" stroke="#d7d7d7" strokeWidth="5" />
          <path d="M16 17V9M13 12l3-3.500 4 3.500" fill="none" stroke="#757575" strokeWidth="2" />
        </svg>
      </button>
      <button aria-label="搜索"><SearchIcon /></button>
    </PanelHeader>
  </aside>
);

const App: React.FC = () => {
  return (
    <div className="relative h-screen pl-2 pr-[9px] pb-px overflow-hidden bg-white text-[#222] font-['Liberation_Sans','Noto_Sans_CJK_SC',sans-serif]">
      <div className="flex flex-col h-full border border-[#1a84d8] bg-[#d7d7d7]">
        <header className="flex items-center h-[45px] shrink-0 pl-[11px] pr-7 bg-white text-lg text-black font-['Noto_Sans','Noto_Sans_CJK_SC',sans-serif]">
          <svg width="24" height="24" viewBox="0 0 24 24" className="mr-1.5">
            <path d="M0 0h24v24H0z" fill="#a22bc6" />
            <path d="M14 0h10v12z" fill="#8a28ae" />
            <path d="M5 0v24" stroke="#d59be6" strokeWidth="1.500" />
            <text x="8" y="22" fill="#f0c8fa" fontSize="10">RP</text>
          </svg>
          <h1>未命名<span className="text-[19px]"> - Axure RP 8 Enterprise Edition : Unlicensed</span></h1>
          <div className="flex items-center ml-auto gap-14">
            <button aria-label="最小化">
              <svg width="15" height="15" viewBox="0 0 15 15" stroke="#111" strokeWidth="1"><path d="M0 7.500h15" /></svg>
            </button>
            <button aria-label="最大化">
              <svg width="15" height="15" viewBox="0 0 15 15" fill="none" stroke="#111" strokeWidth="1"><path d="M.5.5h14v14H.5z" /></svg>
            </button>
            <button aria-label="关闭">
              <svg width="15" height="15" viewBox="0 0 15 15" stroke="#111" strokeWidth="1.200"><path d="M0 0l15 15M15 0L0 15" /></svg>
            </button>
          </div>
        </header>
        <nav className="flex items-center h-9 shrink-0 pl-2.5 gap-[19px] text-lg text-black whitespace-nowrap font-['Noto_Sans','Noto_Sans_CJK_SC',sans-serif]">
          {menus.map((m) => (
            <button key={m.text}>{m.text}<span className="text-[19px]">(<u>{m.key}</u>)</span></button>
          ))}
          <button className="text-[19px]"><u>A</u>ccount</button>
          <button>帮助<span className="text-[19px]">(<u>H</u>)</span></button>
        </nav>
        <Toolbar />
        <FormatBar />
        <div className="flex flex-1 min-h-0">
          <div className="flex flex-col w-[373px] shrink-0 border-r-2 border-[#b9b9b9]">
            <Libraries />
            <Masters />
          </div>
          <Workspace />
          <Inspector />
        </div>
      </div>
      {/* red callouts that tie the selected cell to its name */}
      <svg width="1440" height="460" className="absolute top-0 left-0 pointer-events-none" fill="none" stroke="#f00">
        <path d="M545.500 285.500h173v55h-173z" strokeWidth="5" />
        <path d="M1055.500 269.500h106v55h-106z" strokeWidth="5" />
        <path d="M632 342C845 440 925 470 1100 328" strokeWidth="4" strokeLinecap="round" />
      </svg>
    </div>
  );
};

export default App;
